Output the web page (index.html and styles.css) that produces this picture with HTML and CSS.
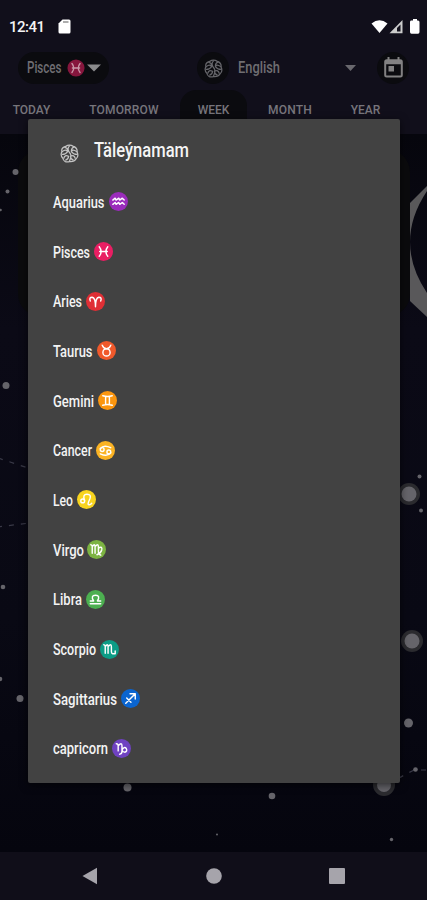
FILE: index.html
```
<!DOCTYPE html>
<html lang="en">
<head>
    <meta charset="UTF-8">
    <meta name="viewport" content="width=device-width, initial-scale=1.0">
    <title>Täleýnamam</title>
    <link rel="stylesheet" href="styles.css">
</head>
<body>
    <!-- shared shapes -->
    <svg class="defs" width="0" height="0">
        <symbol id="brain" viewBox="0 0 20 20">
            <g fill="none" stroke="currentColor" stroke-width="1.3" stroke-linecap="round">
                <path d="M6 2.5Q10 0 14 2.5Q18.500 4 18 8.500Q20 13 17 15.500Q15 19 10 18.500Q4 20 3 15Q0 12 2 8Q1 4 6 2.500Z"/>
                <path d="M10 2Q7 5 10 9Q13 12 10 18M2.500 8Q6 5 8 8Q6 11 2.500 11M5 3.500Q8 4 8 7M17.500 8Q13 5 12 8Q14 11 18 11M15 3Q12 4 12 7M4 15Q5 11 9 13Q9 16 6 17M16 15Q15 11 11 13Q11 16 14 17"/>
            </g>
        </symbol>
        <symbol id="pisces" viewBox="0 0 20 20"><path class="glyph" d="M5.500 5Q9.500 10 5.500 15M14.500 5Q10.500 10 14.500 15M6 10H14"/></symbol>
    </svg>

    <div class="phone">
        <svg class="sky" width="427" height="718" viewBox="0 134 427 718">
            <rect x="18" y="150" width="392" height="166" rx="22" fill="#0b0b0d"/>
            <path d="M427 186L410 203V301L427 317V293Q393 242 427 191Z" fill="#59585a"/>
            <g fill="none" stroke="#393947" stroke-width="1.2" stroke-dasharray="5 7">
                <path d="M-2 458L28 468"/>
                <path d="M-3 527L30 523"/>
                <path d="M399 778Q406 774 414 770H427"/>
            </g>
            <g fill="#2b2b2f">
                <circle cx="409" cy="494" r="11"/>
                <circle cx="412" cy="641" r="11"/>
                <circle cx="384" cy="785" r="11"/>
            </g>
            <g fill="#65646a">
                <circle cx="409" cy="494" r="7.500"/>
                <circle cx="412" cy="641" r="7.500"/>
                <circle cx="384" cy="785" r="7"/>
                <circle cx="408.500" cy="723" r="4.500"/>
                <circle cx="15.500" cy="172" r="3"/>
                <circle cx="7.500" cy="191.500" r="2"/>
                <circle cx="0.500" cy="210" r="1.300"/>
                <circle cx="6" cy="385.500" r="3.500"/>
                <circle cx="3" cy="587" r="2.300"/>
                <circle cx="0" cy="679" r="2.300"/>
                <circle cx="20" cy="698.500" r="3.500"/>
                <circle cx="127.500" cy="787.500" r="4"/>
                <circle cx="272" cy="796" r="3.300"/>
                <circle cx="419.500" cy="476.500" r="2"/>
                <circle cx="421" cy="510.500" r="2"/>
                <circle cx="415.500" cy="769.500" r="2.300"/>
                <circle cx="391.500" cy="839.500" r="1.700"/>
                <circle cx="217" cy="834.500" r="1"/>
            </g>
        </svg>

        <header class="top">
            <div class="status">
                <span class="clock">12:41</span>
                <svg class="sd" width="13" height="15" viewBox="0 0 13 15"><path d="M4.500 .5H11Q12.500 .5 12.500 2V13Q12.500 14.500 11 14.500H2Q.5 14.500 .5 13V4.500Z" fill="#fff"/><path d="M5 3H10.500" stroke="#777" stroke-width="1.200"/></svg>
                <svg class="signals" width="49" height="16" viewBox="0 0 49 16">
                    <path d="M.5 4.500Q8.500 -2 16.500 4.500L8.500 14Z" fill="#fff"/>
                    <path d="M18.500 14.200H31.500V1Z" fill="#ccc"/>
                    <path d="M26 12.500V9L29.500 5.500V12.500Z" fill="#110f1b"/>
                    <path d="M40 1.500H42V0H46V1.500H47Q48.500 1.500 48.500 3V13Q48.500 14.800 47 14.800H40.500Q39 14.800 39 13V3Q39 1.500 40 1.500Z" fill="#fff"/>
                </svg>
            </div>
            <div class="toolbar">
                <div class="sign-pick">
                    <svg width="37" height="24"><text class="dim" x="0" y="17" textLength="34.500" lengthAdjust="spacingAndGlyphs">Pisces</text></svg>
                    <svg class="badge" width="18" height="18" viewBox="0 0 20 20"><circle cx="10" cy="10" r="9.500" fill="#86163d"/><use href="#pisces" class="faded"/></svg>
                    <svg width="14" height="8" viewBox="0 0 14 8"><path d="M0 .5H14L7 7.500Z" fill="#8a8a8c"/></svg>
                </div>
                <div class="round lang"><svg width="19" height="19"><use href="#brain"/></svg></div>
                <svg class="lang-name" width="46" height="24"><text class="dim" x="1" y="17" textLength="42" lengthAdjust="spacingAndGlyphs">English</text></svg>
                <svg class="lang-arrow" width="11" height="6" viewBox="0 0 11 6"><path d="M0 0H11L5.500 6Z" fill="#69686e"/></svg>
                <div class="round cal">
                    <svg width="19" height="21" viewBox="0 0 19 21"><rect x="1.200" y="3.200" width="16.600" height="16.300" rx="1.500" fill="none" stroke="#828182" stroke-width="2"/><path d="M1 5.500H18" stroke="#828182" stroke-width="3.500"/><path d="M4.500 0V4M14.500 0V4" stroke="#828182" stroke-width="2"/><rect x="4.500" y="9" width="5.500" height="5.500" fill="#828182"/></svg>
                </div>
            </div>
            <nav class="tabs">
                <span class="today">TODAY</span>
                <span class="tomorrow">TOMORROW</span>
                <span class="week">WEEK</span>
                <span class="month">MONTH</span>
                <span class="year">YEAR</span>
            </nav>
        </header>

        <footer class="navbar">
            <svg width="16" height="18" viewBox="0 0 16 18"><path d="M.5 9L15 .8V17.200Z" fill="#a6a4ab"/></svg>
            <svg width="16" height="16"><circle cx="8" cy="8" r="7.800" fill="#a6a4ab"/></svg>
            <svg width="16" height="16"><rect width="16" height="16" rx="1" fill="#a6a4ab"/></svg>
        </footer>

        <section class="dialog">
            <div class="dialog-title">
                <svg class="logo" width="19" height="19"><use href="#brain"/></svg>
                <svg width="100" height="34"><text class="title" x="0" y="22" textLength="95" lengthAdjust="spacingAndGlyphs">Täleýnamam</text></svg>
            </div>
            <ul class="signs">
                <li>
                    <svg width="54" height="26"><text x="0" y="19" textLength="51.500" lengthAdjust="spacingAndGlyphs">Aquarius</text></svg>
                    <svg class="badge" viewBox="0 0 20 20"><circle cx="10" cy="10" r="10" fill="#9a2cbb"/><path class="glyph" d="M4 8.500L6.500 6.500L7.500 8.500L10.300 6.500L11.300 8.500L14 6.500L16 8.500M4 13L6.500 11L7.500 13L10.300 11L11.300 13L14 11L16 13"/></svg>
                </li>
                <li>
                    <svg width="39" height="26"><text x="0" y="19" textLength="37" lengthAdjust="spacingAndGlyphs">Pisces</text></svg>
                    <svg class="badge" viewBox="0 0 20 20"><circle cx="10" cy="10" r="10" fill="#e91e63"/><use href="#pisces"/></svg>
                </li>
                <li>
                    <svg width="31" height="26"><text x="0" y="19" textLength="29" lengthAdjust="spacingAndGlyphs">Aries</text></svg>
                    <svg class="badge" viewBox="0 0 20 20"><circle cx="10" cy="10" r="10" fill="#e02f35"/><path class="glyph" d="M4.500 9.500Q3 5.500 6.500 5.500Q10 6 10 15.500Q10 6 13.500 5.500Q17 5.500 15.500 9.500"/></svg>
                </li>
                <li>
                    <svg width="42" height="26"><text x="0" y="19" textLength="39.500" lengthAdjust="spacingAndGlyphs">Taurus</text></svg>
                    <svg class="badge" viewBox="0 0 20 20"><circle cx="10" cy="10" r="10" fill="#f0592b"/><path class="glyph" d="M5.500 4.500Q7 8.200 10 8.200Q13 8.200 14.500 4.500"/><circle class="glyph" cx="10" cy="12" r="3.800"/></svg>
                </li>
                <li>
                    <svg width="43" height="26"><text x="0" y="19" textLength="41" lengthAdjust="spacingAndGlyphs">Gemini</text></svg>
                    <svg class="badge" viewBox="0 0 20 20"><circle cx="10" cy="10" r="10" fill="#fb960f"/><path class="glyph" d="M5 5Q10 6.500 15 5M5 15Q10 13.500 15 15M8 6V14M12 6V14"/></svg>
                </li>
                <li>
                    <svg width="41" height="26"><text x="0" y="19" textLength="39" lengthAdjust="spacingAndGlyphs">Cancer</text></svg>
                    <svg class="badge" viewBox="0 0 20 20"><circle cx="10" cy="10" r="10" fill="#fbb324"/><g class="glyph"><circle cx="6.500" cy="9" r="2"/><circle cx="13.500" cy="11.500" r="2"/><path d="M4.500 8Q8 3.500 15.500 7M15.500 12.500Q12 17 4.500 13.500"/></g></svg>
                </li>
                <li>
                    <svg width="22" height="26"><text x="0" y="19" textLength="20" lengthAdjust="spacingAndGlyphs">Leo</text></svg>
                    <svg class="badge" viewBox="0 0 20 20"><circle cx="10" cy="10" r="10" fill="#f8d41f"/><circle class="glyph" cx="6" cy="11.500" r="2"/><path class="glyph" d="M8 11Q5.500 4.500 10.500 4.500Q15.500 4.500 13.500 9.500Q10.500 15.500 12.500 15.500Q14 16 15.500 14"/></svg>
                </li>
                <li>
                    <svg width="32" height="26"><text x="0" y="19" textLength="31" lengthAdjust="spacingAndGlyphs">Virgo</text></svg>
                    <svg class="badge" viewBox="0 0 20 20"><circle cx="10" cy="10" r="10" fill="#7cb342"/><path class="glyph" d="M4 5Q5.500 5 5.500 7V14M5.500 7Q8.500 3 8.500 7V14M8.500 7Q12 3 12 7V12Q12 15 14.500 16M12 8.500Q16.500 6 15.500 10.500Q14.500 14 10.500 15.500"/></svg>
                </li>
                <li>
                    <svg width="31" height="26"><text x="0" y="19" textLength="29" lengthAdjust="spacingAndGlyphs">Libra</text></svg>
                    <svg class="badge" viewBox="0 0 20 20"><circle cx="10" cy="10" r="10" fill="#4caf50"/><path class="glyph" d="M4.500 14.500H15.500M4.500 11.500H8Q4.500 5.500 10 5.500Q15.500 5.500 12 11.500H15.500"/></svg>
                </li>
                <li>
                    <svg width="45" height="26"><text x="0" y="19" textLength="43" lengthAdjust="spacingAndGlyphs">Scorpio</text></svg>
                    <svg class="badge" viewBox="0 0 20 20"><circle cx="10" cy="10" r="10" fill="#0c9c86"/><path class="glyph" d="M4 5Q5.500 5 5.500 7V14M5.500 7Q8.500 3 8.500 7V14M8.500 7Q12 3 12 7V12Q12 15.500 16 14M16 11.500V14.500L13.800 14.500"/></svg>
                </li>
                <li>
                    <svg width="66" height="26"><text x="0" y="19" textLength="64" lengthAdjust="spacingAndGlyphs">Sagittarius</text></svg>
                    <svg class="badge" viewBox="0 0 20 20"><circle cx="10" cy="10" r="10" fill="#0b65d0"/><path class="glyph" d="M5 15L15 5M9.500 5H15V10.500M6 9.500L10.500 14"/></svg>
                </li>
                <li>
                    <svg width="57" height="26"><text x="0" y="19" textLength="55" lengthAdjust="spacingAndGlyphs">capricorn</text></svg>
                    <svg class="badge" viewBox="0 0 20 20"><circle cx="10" cy="10" r="10" fill="#6f42c1"/><path class="glyph" d="M4.500 5Q6.500 5 6.500 7V12.500M6.500 7Q10.500 3 10.500 7V13Q10.500 16 8 16M10.500 11.500Q13 7.500 15 10Q16.500 13 13.500 14Q11.500 14 10.500 11.500"/></svg>
                </li>
            </ul>
        </section>
    </div>
</body>
</html>
```
FILE: styles.css
```
body, ul{ margin:0; padding:0;}
body{ background:#100e19; font-family:"Roboto", "Liberation Sans", sans-serif;}
svg{ display:block; flex:none; overflow:visible;}
.defs{ position:absolute;}
.phone{
    position:relative; width:427px; height:900px; overflow:hidden;
    display:flex; flex-direction:column; justify-content:space-between;
    background:linear-gradient(#06060d 134px, #0b0a16 330px, #090914 620px, #05050e 852px);
}
.sky{ position:absolute; left:0; top:134px; overflow:hidden;}

/* top area */
.top{ position:relative; height:134px; background:#110f1b;}
.status{
    height:52px; box-sizing:border-box; padding:1px 7px 0 9px;
    display:flex; align-items:center;
}
.clock{ width:49px; color:#f4f4f4; font-size:15px; font-weight:500; letter-spacing:-0.5px;}
.signals{ margin-left:auto;}
.toolbar{
    height:32px; padding:0 18px; display:flex; align-items:center;
}
.sign-pick{
    width:92px; height:32px; box-sizing:border-box; padding-left:9px; border-radius:16px;
    background:#0b0b0f; display:flex; align-items:center;
}
.sign-pick .badge{ width:18px; height:18px; margin:0 2px 0 3px;}
.dim{ font-size:16px; font-weight:500; fill:#6f6e72;}
.round{
    width:32px; height:32px; border-radius:50%; background:#0b0b0f; color:#65656a;
    display:flex; justify-content:center; align-items:center;
}
.lang{ margin-left:88px;}
.lang-name{ margin-left:8px;}
.lang-arrow{ margin-left:62px;}
.cal{ margin-left:21px;}
.cal svg{ margin-top:-2px;}
.tabs{
    height:44px; margin-top:6px; display:flex;
    color:#77757b; font-size:12px; font-weight:500; line-height:40px;
    text-align:center; white-space:nowrap;
}
.today{ width:63px;}
.tomorrow{ width:122px; letter-spacing:0.2px;}
.week{ width:57px; background:#0b0b0f; border-radius:16px; padding:0 5px; margin-left:-5px; margin-right:-5px;}
.month{ width:96px; letter-spacing:0.2px;}
.year{ width:55px;}

.navbar{
    position:relative; height:48px; box-sizing:border-box; padding:0 82px;
    background:#100e19; display:flex; justify-content:space-between; align-items:center;
}

/* popup with the twelve signs */
.dialog{
    position:absolute; left:28px; top:119px; width:372px; height:664px;
    background:#424242; border-radius:2px; box-shadow:0 2px 8px rgba(0,0,0,0.6);
}
.dialog-title{ height:58px; padding:0 32px; display:flex; align-items:center;}
.logo{ color:#c4c4c4; margin:11px 15px 0 0;}
.dialog-title .logo + svg{ margin-top:7px;}
.title{ font-size:19.5px; font-weight:500; fill:#f5f5f5;}
.signs{ list-style:none; padding-left:25px;}
.signs li{ height:49.7px; display:flex; align-items:center; gap:2px;}
.signs text{ font-size:16px; font-weight:500; fill:#f3f3f3;}
.badge{ width:19px; height:19px;}
.glyph{ fill:none; stroke:#fff; stroke-width:1.5; stroke-linecap:round; stroke-linejoin:round;}
.faded{ opacity:0.55;}
```
